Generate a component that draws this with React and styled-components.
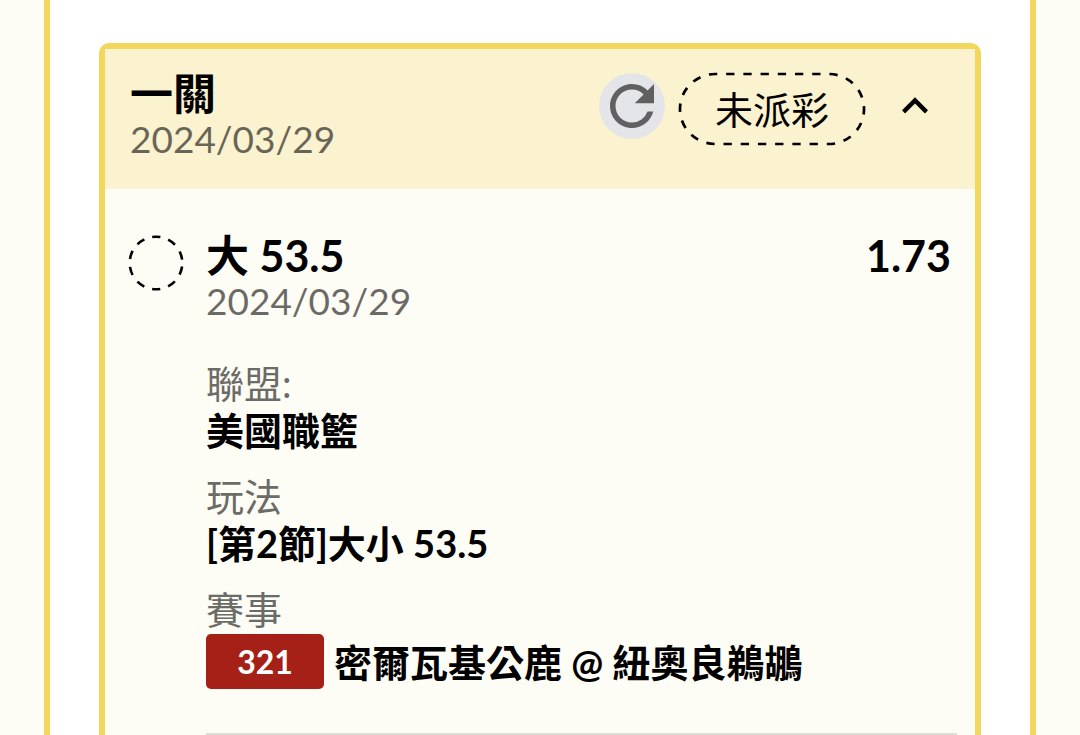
import React, { useState } from "react"
import styled, { createGlobalStyle } from "styled-components"
import { MdExpandLess, MdExpandMore, MdRefresh } from "react-icons/md"

const legs = [
	{
		pick: "大 53.5",
		date: "2024/03/29",
		odds: "1.73",
		league: "美國職籃",
		market: "[第2節]大小 53.5",
		code: "321",
		teams: "密爾瓦基公鹿 @ 紐奧良鵜鶘",
	},
]

const App = () => {
	const [open, setOpen] = useState(true)

	return (
		<>
			<GlobalStyle />
			<Frame>
				<Ticket>
					<TicketHeader>
						<div>
							<Title>一關</Title>
							<DateText dateTime="2024-03-29">2024/03/29</DateText>
						</div>
						<Actions>
							<RefreshButton type="button" aria-label="重新整理">
								<MdRefresh size={66} />
							</RefreshButton>
							<Status>
								<Outline aria-hidden="true">
									<StatusDashes />
								</Outline>
								未派彩
							</Status>
							<ToggleButton
								type="button"
								aria-label="展開"
								aria-expanded={open}
								onClick={() => setOpen(!open)}
							>
								{open ? <MdExpandLess size={52} /> : <MdExpandMore size={52} />}
							</ToggleButton>
						</Actions>
					</TicketHeader>
					{open && legs.map((leg) => <Leg key={leg.code} leg={leg} />)}
				</Ticket>
			</Frame>
		</>
	)
}

const Leg = ({ leg }) => (
	<LegRow>
		<PendingMark viewBox="0 0 56 56" aria-hidden="true">
			<circle cx="28" cy="28" r="26.3" />
		</PendingMark>
		<LegContent>
			<LegHeading>
				<Title>{leg.pick}</Title>
				<Odds>{leg.odds}</Odds>
			</LegHeading>
			<DateText dateTime="2024-03-29">{leg.date}</DateText>
			<Details>
				<div>
					<Label>聯盟:</Label>
					<Value>{leg.league}</Value>
				</div>
				<div>
					<Label>玩法</Label>
					<Value>{leg.market}</Value>
				</div>
				<div>
					<Label>賽事</Label>
					<Match>
						<Code>{leg.code}</Code>
						{leg.teams}
					</Match>
				</div>
			</Details>
		</LegContent>
	</LegRow>
)

const GlobalStyle = createGlobalStyle`
	* {
		box-sizing: border-box;
	}
	body {
		margin: 0;
		background-color: #fefdf5;
		color: #000;
		font-family: Lato, "Noto Sans CJK TC", sans-serif;
	}
	button {
		padding: 0;
		border: none;
		background: none;
		color: inherit;
		font: inherit;
		cursor: pointer;
	}
`

const Frame = styled.main`
	display: flex;
	flex-direction: column;
	min-height: 100vh;
	margin: 0 44px;
	padding: 43px 49px 0;
	background-color: #fff;
	border: solid #f2d75c;
	border-width: 0 6px;
`

const Ticket = styled.section`
	flex: 1;
	background-color: #fefdf5;
	border: 6px solid #f2d75c;
	border-bottom: none;
	border-radius: 10px 10px 0 0;
`

const TicketHeader = styled.header`
	display: flex;
	justify-content: space-between;
	padding: 21px 34px 29px 25px;
	background-color: #fbf2cf;
`

const Title = styled.h2`
	margin: 0;
	font-size: 43px;
	font-weight: 700;
	line-height: 48px;
`

const DateText = styled.time`
	display: block;
	color: #000;
	font-size: 37px;
	line-height: 42px;
	opacity: 0.58;
`

const Actions = styled.div`
	display: flex;
	align-items: flex-start;
	padding-top: 3px;
`

const RefreshButton = styled.button`
	display: flex;
	margin-right: 14px;
	border-radius: 50%;
	&& {
		background-color: #e4e5e9;
		color: #606060;
	}
`

const Status = styled.span`
	position: relative;
	padding: 0 36px;
	font-size: 38px;
	line-height: 72px;
`

const Outline = styled.svg`
	position: absolute;
	top: 0;
	left: 0;
	width: 100%;
	height: 100%;
	overflow: visible;
`

const StatusDashes = styled.rect.attrs({ rx: 35, pathLength: 442 })`
	x: 1px;
	y: 1px;
	width: calc(100% - 2px);
	height: calc(100% - 2px);
	fill: none;
	stroke: #000;
	stroke-width: 2.7px;
	stroke-dasharray: 8.2 8.8;
	stroke-dashoffset: -11px;
`

const ToggleButton = styled.button`
	display: flex;
	align-items: center;
	height: 66px;
	margin-left: 24px;
`

const LegRow = styled.article`
	display: flex;
	gap: 22px;
	padding: 43px 18px 0 23px;
`

const PendingMark = styled.svg`
	flex: none;
	width: 56px;
	height: 56px;
	margin-top: 3px;
	fill: none;
	stroke: #000;
	stroke-width: 2.6px;
	stroke-dasharray: 8.4 8.12;
	stroke-dashoffset: -3.6px;
`

const LegContent = styled.div`
	flex: 1;
	padding-bottom: 44px;
	border-bottom: 2px solid #dfded8;
`

const LegHeading = styled.div`
	display: flex;
	justify-content: space-between;
	padding-right: 6px;
`

const Odds = styled.strong`
	font-size: 43px;
	line-height: 48px;
`

const Details = styled.div`
	display: flex;
	flex-direction: column;
	gap: 19px;
	margin-top: 38px;
`

const Label = styled.div`
	color: #6b6b67;
	font-size: 38px;
	line-height: 46px;
`

const Value = styled.div`
	font-size: 38px;
	font-weight: 700;
	line-height: 48px;
`

const Match = styled(Value)`
	display: flex;
	align-items: center;
	gap: 10px;
	margin-top: 2px;
`

const Code = styled.span`
	min-width: 118px;
	background-color: #a52016;
	border-radius: 5px;
	color: #fff;
	font-size: 32px;
	line-height: 55px;
	text-align: center;
`

export default App
